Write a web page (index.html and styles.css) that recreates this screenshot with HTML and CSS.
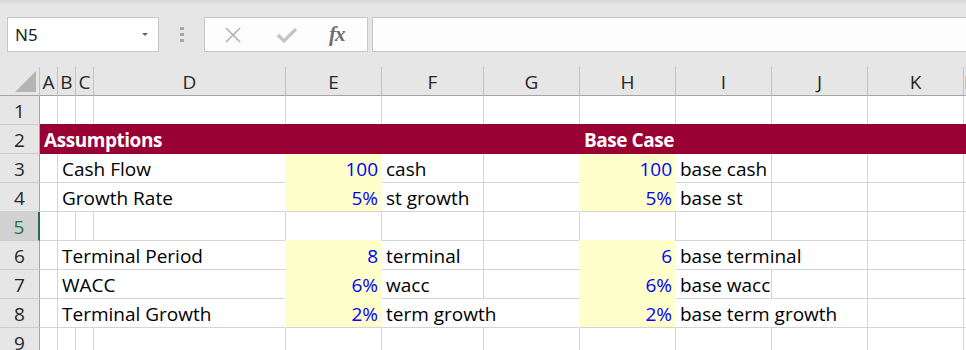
FILE: index.html
```html
<!DOCTYPE html>
<html lang="en">
<head>
    <meta charset="UTF-8">
    <title>Assumptions - Sheet</title>
    <link rel="stylesheet" href="styles.css">
</head>
<body>
    <div class="toolbar">
        <div class="name-box">
            <span>N5</span>
            <span class="caret"></span>
        </div>
        <div class="grip"><i></i><i></i><i></i></div>
        <div class="fx-buttons">
            <svg class="btn-x" width="18" height="16" viewBox="0 0 18 16"><path d="M2 1 L16 15 M16 1 L2 15" stroke="#b3b3b3" stroke-width="1.6" fill="none"/></svg>
            <svg class="btn-ok" width="22" height="16" viewBox="0 0 22 16"><path d="M2 8 L8 14 L20 2" stroke="#c4c4c4" stroke-width="3.2" fill="none"/></svg>
            <span class="fx">fx</span>
        </div>
        <div class="formula-input"></div>
    </div>

    <div class="sheet">
        <!-- column headers -->
        <div class="corner"><span class="tri"></span></div>
        <div class="ch">A</div><div class="ch">B</div><div class="ch">C</div>
        <div class="ch">D</div><div class="ch">E</div><div class="ch">F</div>
        <div class="ch">G</div><div class="ch">H</div><div class="ch">I</div>
        <div class="ch">J</div><div class="ch">K</div><div class="ch">L</div>

        <!-- row 1 -->
        <div class="rh">1</div>
        <div class="c"></div><div class="c"></div><div class="c"></div><div class="c"></div>
        <div class="c"></div><div class="c"></div><div class="c"></div><div class="c"></div>
        <div class="c"></div><div class="c"></div><div class="c"></div><div class="c"></div>

        <!-- row 2 -->
        <div class="rh">2</div>
        <div class="c band s7">Assumptions</div>
        <div class="c band s5">Base Case</div>

        <!-- row 3 -->
        <div class="rh">3</div>
        <div class="c"></div>
        <div class="c s3">Cash Flow</div>
        <div class="c input">100</div>
        <div class="c">cash</div>
        <div class="c"></div>
        <div class="c input">100</div>
        <div class="c">base cash</div>
        <div class="c"></div><div class="c"></div><div class="c"></div>

        <!-- row 4 -->
        <div class="rh">4</div>
        <div class="c"></div>
        <div class="c s3">Growth Rate</div>
        <div class="c input last">5%</div>
        <div class="c">st growth</div>
        <div class="c"></div>
        <div class="c input last">5%</div>
        <div class="c">base st</div>
        <div class="c"></div><div class="c"></div><div class="c"></div>

        <!-- row 5 -->
        <div class="rh active">5</div>
        <div class="c"></div><div class="c"></div><div class="c"></div><div class="c"></div>
        <div class="c"></div><div class="c"></div><div class="c"></div><div class="c"></div>
        <div class="c"></div><div class="c"></div><div class="c"></div><div class="c"></div>

        <!-- row 6 -->
        <div class="rh">6</div>
        <div class="c"></div>
        <div class="c s3">Terminal Period</div>
        <div class="c input first">8</div>
        <div class="c">terminal</div>
        <div class="c"></div>
        <div class="c input first">6</div>
        <div class="c s2">base terminal</div>
        <div class="c"></div><div class="c"></div>

        <!-- row 7 -->
        <div class="rh">7</div>
        <div class="c"></div>
        <div class="c s3">WACC</div>
        <div class="c input">6%</div>
        <div class="c">wacc</div>
        <div class="c"></div>
        <div class="c input">6%</div>
        <div class="c">base wacc</div>
        <div class="c"></div><div class="c"></div><div class="c"></div>

        <!-- row 8 -->
        <div class="rh">8</div>
        <div class="c"></div>
        <div class="c s3">Terminal Growth</div>
        <div class="c input last">2%</div>
        <div class="c s2">term growth</div>
        <div class="c input last">2%</div>
        <div class="c s2">base term growth</div>
        <div class="c"></div><div class="c"></div>

        <!-- row 9 -->
        <div class="rh">9</div>
        <div class="c"></div><div class="c"></div><div class="c"></div><div class="c"></div>
        <div class="c"></div><div class="c"></div><div class="c"></div><div class="c"></div>
        <div class="c"></div><div class="c"></div><div class="c"></div><div class="c"></div>
    </div>
</body>
</html>
```

FILE: styles.css
```css
/* Page */
body {
    margin: 0;
    width: 966px;
    height: 350px;
    overflow: hidden;
    background: #e6e6e6;
    font-family: "Open Sans", "Noto Sans", sans-serif;
}

/* Formula bar */
.toolbar {
    height: 67px;
    box-sizing: border-box;
    padding: 17px 0 0 7px;
    display: flex;
    align-items: flex-start;
    overflow: hidden;
    background: linear-gradient(#d6d6d6, #e6e6e6 5px);
}

.name-box {
    width: 152px;
    height: 35px;
    box-sizing: border-box;
    border: 1px solid #c6c6c6;
    background: #fff;
    display: flex;
    align-items: center;
    justify-content: space-between;
    padding: 0 10px 0 7px;
    font-family: "Noto Sans", sans-serif;
    font-size: 17px;
    color: #222;
}

.caret {
    width: 0;
    height: 0;
    border-left: 3px solid transparent;
    border-right: 3px solid transparent;
    border-top: 3px solid #666;
}

.grip {
    width: 45px;
    height: 35px;
    display: flex;
    flex-direction: column;
    align-items: center;
    justify-content: center;
    gap: 3px;
}

.grip i {
    width: 4px;
    height: 3px;
    background: #a8a8a8;
}

.fx-buttons {
    width: 164px;
    height: 35px;
    box-sizing: border-box;
    border: 1px solid #c6c6c6;
    background: #fdfdfd;
    display: flex;
    align-items: center;
    padding-left: 19px;
}

.btn-x {
    margin-right: 34px;
}

.btn-ok {
    margin-right: 31px;
}

.fx {
    font-family: "Liberation Serif", serif;
    font-style: italic;
    font-weight: bold;
    font-size: 21px;
    color: #6e6e6e;
    letter-spacing: -1px;
}

.formula-input {
    flex: 1;
    height: 35px;
    margin-left: 4px;
    margin-right: -4px;
    box-sizing: border-box;
    border: 1px solid #c6c6c6;
    background: #fdfdfd;
}

/* Grid */
.sheet {
    display: grid;
    grid-template-columns: 40px 18px 18px 18px 192px 96px 102px 96px 96px 96px 96px 96px 1fr;
    grid-auto-rows: 29px;
    font-size: 19px;
    color: #000;
    background: #fff;
}

.corner,
.ch,
.rh {
    background: #e6e6e6;
    box-sizing: border-box;
    color: #262626;
    display: flex;
    align-items: center;
    justify-content: center;
    padding-top: 1px;
}

.corner {
    position: relative;
    border-right: 1px solid #c2c2c2;
    border-bottom: 1px solid #a4a4a4;
}

.tri {
    position: absolute;
    right: 3px;
    bottom: 3px;
    width: 0;
    height: 0;
    border-left: 21px solid transparent;
    border-bottom: 21px solid #b4b4b4;
}

.ch {
    border-right: 1px solid #c2c2c2;
    border-bottom: 1px solid #a4a4a4;
}

.rh {
    border-right: 1px solid #a4a4a4;
    border-bottom: 1px solid #cdcdcd;
}

.rh.active {
    background: #d2d2d2;
    color: #217346;
    border-right: 2px solid #217346;
}

.c {
    box-sizing: border-box;
    border-right: 1px solid #d4d4d4;
    border-bottom: 1px solid #d4d4d4;
    padding: 2px 3px 0 4px;
    line-height: 26px;
    white-space: nowrap;
    overflow: hidden;
}

.s2 { grid-column: span 2; }
.s3 { grid-column: span 3; }
.s5 { grid-column: span 5; }
.s7 { grid-column: span 7; }

.band {
    background: #990033;
    color: #fff;
    font-weight: bold;
    letter-spacing: -0.45px;
    border-color: #990033;
    box-shadow: 0 -1px 0 #990033;
}

.input {
    background: #ffffcc;
    color: #0000ff;
    text-align: right;
    border-color: #ffffcc;
    box-shadow: -1px 0 0 #ffffcc;
}

.input.first {
    box-shadow: -1px -1px 0 #ffffcc;
}

.input.last {
    border-bottom-color: #d4d4d4;
}
```
